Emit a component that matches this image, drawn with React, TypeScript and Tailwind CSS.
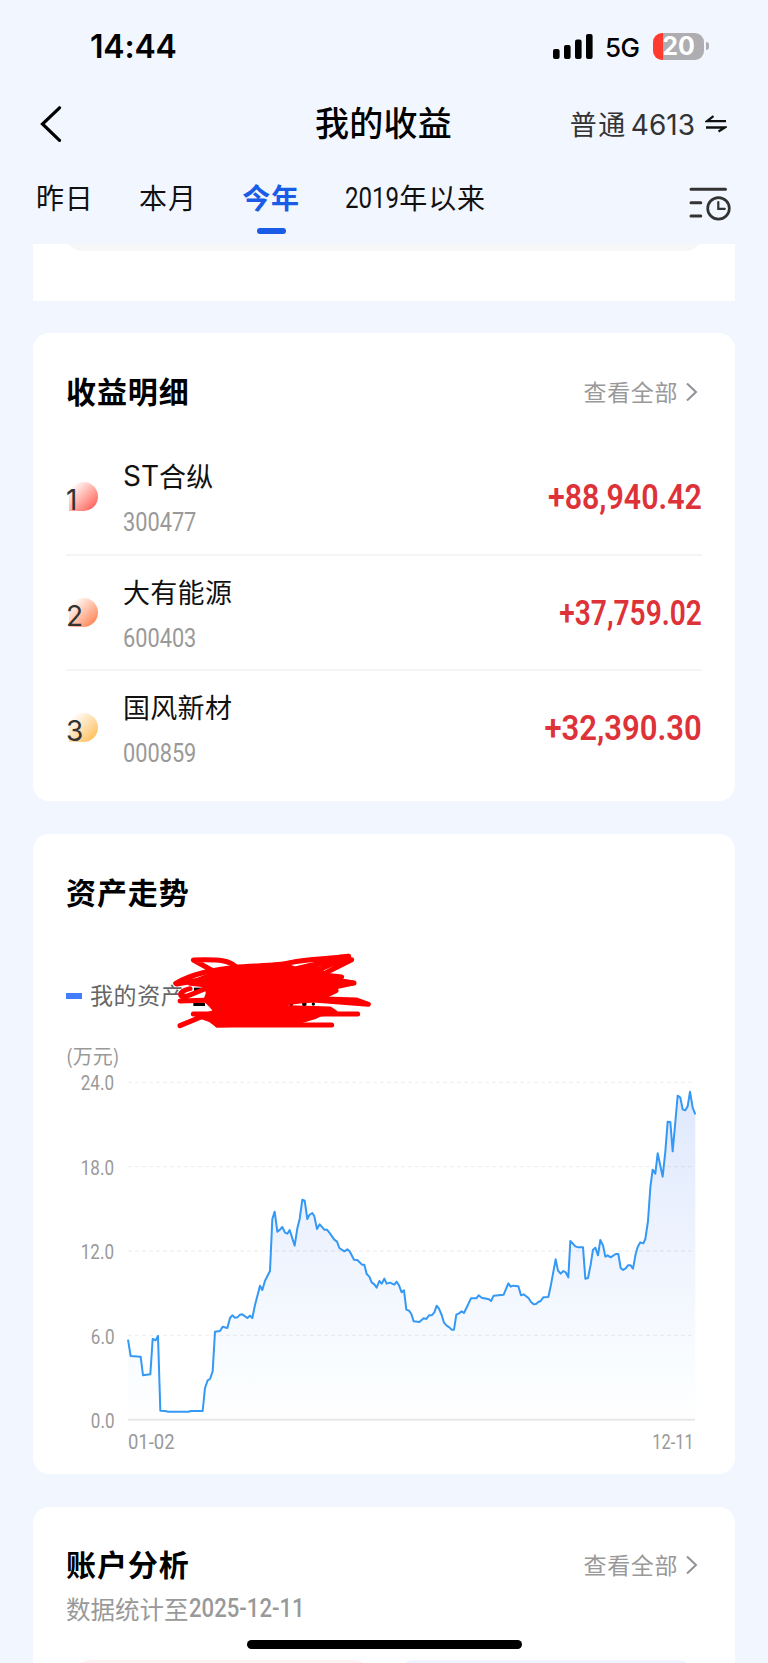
import type { ReactNode } from 'react'
import clsx from 'clsx'

const tabs = ['昨日', '本月', '今年']

const stocks = [
  { rank: 1, name: 'ST合纵', code: '300477', profit: '+88,940.42', badge: 'to-[#ff3b41]', scale: 'scale-x-[0.88]' },
  { rank: 2, name: '大有能源', code: '600403', profit: '+37,759.02', badge: 'to-[#ff7033]', scale: 'scale-x-[0.815]' },
  { rank: 3, name: '国风新材', code: '000859', profit: '+32,390.30', badge: 'to-[#ffb42e]', scale: 'scale-x-[0.9]' },
]

const axis = ['24.0', '18.0', '12.0', '6.0', '0.0']

// asset curve, in thirds of a pixel from the top left of the plot
const curve =
  '0,773 8,822 38,824 45,880 67,877 74,771 83,775 90,762 97,986 111,987 121,989 181,989 189,987 224,987 231,918 239,895 246,891 254,868 261,749 276,747 284,734 298,738 306,708 313,700 321,707 328,706 336,698 343,697 358,708 366,701 373,708 381,669 396,611 403,624 411,596 426,567 433,411 440,389 448,449 456,443 463,435 471,452 478,455 485,444 500,491 508,439 515,411 523,353 530,356 538,411 ' +
  '544,399 553,393 559,403 567,441 575,427 589,443 597,443 604,452 619,473 627,479 634,498 649,508 658,502 665,508 678,533 688,534 702,548 709,548 716,576 724,584 731,601 739,607 746,617 754,597 761,605 769,590 776,605 786,602 799,608 806,599 813,610 821,631 828,625 835,683 843,686 850,696 857,718 874,720 887,709 895,711 903,700 911,700 919,691 926,671 933,680 941,699 948,722 956,731 964,736 971,743 978,743 985,698 993,694 1001,688 1008,693 1029,649 1045,649 1052,640 1061,647 1083,652 1089,657 1097,641 1127,638 ' +
  '1141,604 1148,614 1155,611 1171,613 1179,640 1187,637 1202,649 1209,660 1217,667 1224,666 1231,660 1238,657 1246,646 1261,645 1268,613 1283,532 1290,566 1298,575 1306,567 1313,571 1321,586 1327,477 1342,493 1351,496 1365,496 1372,590 1380,588 1388,548 1395,503 1402,497 1410,520 1417,474 1425,490 1432,524 1439,520 1448,526 1463,516 1471,516 1478,558 1485,564 1493,559 1500,550 1508,550 1515,560 1523,516 1529,495 1537,481 1546,484 1552,471 1560,417 1567,317 1574,263 1582,275 1589,214 1604,284 1612,209 1619,119 1627,120 1634,208 1642,120 1649,41 1657,47 1664,82 1672,85 1679,73 1686,29 1694,77 1702,97'

function Num({ children, className }: { children: ReactNode; className?: string }) {
  return <span className={clsx("inline-block whitespace-nowrap font-['Roboto',sans-serif]", className)}>{children}</span>
}

function StatusBar() {
  return (
    <div className="flex h-[90px] items-center pl-[90px] pr-[59px] pt-0.5 font-['Inter',sans-serif] text-black">
      <span className="pt-0.5 text-[32px] font-semibold leading-none tracking-[-0.2px]">14:44</span>
      <svg className="ml-auto" width="40" height="25" viewBox="0 0 40 25">
        <rect x="0" y="15" width="6.6" height="10" rx="2" />
        <rect x="11" y="11" width="6.6" height="14" rx="2" />
        <rect x="22" y="5.5" width="6.6" height="19.5" rx="2" />
        <rect x="33" y="0" width="6.6" height="25" rx="2" />
      </svg>
      <span className="ml-3 w-[35px] pt-1 text-[26px] font-medium leading-none tracking-[-0.5px]">5G</span>
      <div className="ml-[13px] flex h-[27px] w-[51px] items-center justify-center rounded-[9px] bg-linear-to-r from-[#ff3b30] from-[20%] to-[#adadb2] to-[20%] text-[25px] font-bold leading-none text-white">
        20
      </div>
      <div className="ml-0.5 h-2 w-[3px] rounded-r-full bg-[#adadb2]" />
    </div>
  )
}

function Header() {
  return (
    <header className="grid h-[67px] grid-cols-3 items-center pl-10 pr-[41px]">
      <svg width="22" height="36" viewBox="0 0 22 36" fill="none" stroke="#000" strokeWidth="3.2" strokeLinecap="round">
        <path d="M19.500 1.800 2.500 18l17 16.300" />
      </svg>
      <h1 className="-mt-[3px] text-center text-[34px] font-medium leading-none tracking-[0.2px] text-black">我的收益</h1>
      <div className="flex items-center justify-end text-[#333]">
        <span className="text-[27px] leading-none tracking-[1.5px]">普通</span>
        <span className="ml-1 pt-0.5 font-['Inter',sans-serif] text-[28px] leading-none">4613</span>
        <svg className="ml-2.5" width="22" height="18" viewBox="0 0 22 18" fill="none" stroke="#111" strokeWidth="2.3">
          <path d="M21 6.200H2l6.500-5M1 12.500h19l-6.500 4" />
        </svg>
      </div>
    </header>
  )
}

function Tabs() {
  return (
    <nav className="flex h-[87px] items-start pl-9 pr-[37px] pt-6 text-[28px] leading-8 tracking-[0.8px] text-[#111]">
      {tabs.map((tab) => (
        <div key={tab} className={clsx('mr-[45.5px] flex flex-col items-center', tab === '今年' && 'font-bold text-[#1a5ce6]')}>
          {tab}
          {tab === '今年' && <div className="mt-[15px] h-[5.500px] w-[29px] rounded-full bg-[#1a5ce6]" />}
        </div>
      ))}
      <div className="flex">
        <Num className="w-[54px] origin-left scale-x-[0.83] text-[29px] leading-[34px] tracking-normal">2019</Num>
        年以来
      </div>
      <svg className="ml-auto mt-1.5" width="42" height="34" viewBox="0 0 42 34" fill="none" stroke="#333" strokeLinecap="round">
        <path d="M2 2.300h34.500M2 15.700h9.800M2 29h9.800" strokeWidth="3" />
        <circle cx="29.500" cy="21.400" r="10.800" strokeWidth="2.700" />
        <path d="M29.300 15v6.800h6.500" strokeWidth="2.200" />
      </svg>
    </nav>
  )
}

function SectionTitle({ title, more }: { title: string; more?: boolean }) {
  return (
    <div className="flex h-[31px] items-center justify-between">
      <h2 className="-mt-[3px] text-[30px] font-bold leading-none tracking-[0.9px] text-black">{title}</h2>
      {more && (
        <a href="#" className="flex items-center text-[23px] leading-none tracking-[0.6px] text-[#999]">
          <span className="-mt-px">查看全部</span>
          <svg className="ml-2 mr-1" width="12" height="20" viewBox="0 0 12 20" fill="none" stroke="#909096" strokeWidth="2">
            <path d="m1 1.500 9 8.500-9 8.500" />
          </svg>
        </a>
      )}
    </div>
  )
}

function ProfitList() {
  return (
    <section className="mt-8 h-[468px] rounded-2xl bg-white px-[33px] pt-[43px]">
      <SectionTitle title="收益明细" more />
      <ul className="mt-[33px]">
        {stocks.map((s) => (
          <li key={s.code} className="flex h-[115.5px] items-start border-b-2 border-[#f4f4f5] last:border-0">
            <div className="relative ml-[3px] mt-[42px] size-[29px] shrink-0">
              <div className={clsx('size-full rounded-full rounded-bl-none bg-linear-to-br from-white from-10%', s.badge)} />
              <span className="absolute -left-[3px] top-[4px] font-['Inter',sans-serif] text-[28px] leading-[29px] text-[#333]">{s.rank}</span>
            </div>
            <div className="ml-[25px] flex flex-col pt-5">
              <span className="flex text-[27px] leading-8 tracking-[0.3px] text-[#111]">
                {s.name.startsWith('ST') && <span className="font-['Inter',sans-serif] text-[28px] tracking-normal">ST</span>}
                {s.name.replace('ST', '')}
              </span>
              <Num className="mt-[17px] origin-left scale-x-[0.87] text-[25px] leading-7 text-[#999]">{s.code}</Num>
            </div>
            <Num className={clsx('ml-auto mt-[37px] origin-right text-[34.500px] font-semibold leading-10 text-[#dd3238]', s.scale)}>{s.profit}</Num>
          </li>
        ))}
      </ul>
    </section>
  )
}

function Scribble() {
  return (
    <svg className="absolute -top-[30px] left-[104px]" width="205" height="80" viewBox="510 150 615 240" fill="none" stroke="#f00" strokeWidth="15" strokeLinecap="round" strokeLinejoin="round">
      <g fill="#000" stroke="none">
        <rect x="580" y="308" width="35" height="10" />
        <rect x="582" y="263" width="34" height="10" />
        <circle cx="873" cy="313" r="6" />
        <circle cx="913" cy="312" r="7" />
        <circle cx="940" cy="312" r="5" />
      </g>
      <path
        fill="#f00"
        d="M640 222 705 207 790 198 850 194 885 207 920 202 960 206 970 225 1025 231 1005 239 1060 249 1000 262 1008 272 985 283 960 297 935 301 900 303 860 308 820 322 990 327 1005 337 960 342 945 350 885 368 652 375 632 360 605 350 650 335 632 314 618 300 625 280 620 255 570 250Z"
      />
      <path d="M527 250C570 225 640 206 710 203C690 180 660 178 580 180L645 216M700 202C770 196 830 198 870 188C930 176 980 178 1046 169C1000 170 960 190 900 212M890 206C950 190 1000 180 1055 179L970 222M960 208 1045 170M530 252 650 232M570 266C530 275 535 300 570 285L650 252M540 303 640 300M950 296 1070 300 1105 313 940 300M580 342H1073M605 350 540 377M652 375H995M960 249H1062" />
    </svg>
  )
}

function AssetChart() {
  return (
    <section className="mt-[33px] h-[640px] rounded-2xl bg-white px-[33px] pt-[43px]">
      <SectionTitle title="资产走势" />
      <div className="relative mt-[72px] flex h-8 items-center">
        <div className="h-[6px] w-4 bg-[#447dfb]" />
        <span className="-mt-[3px] ml-2 text-[23px] leading-none tracking-[0.6px] text-[#666]">我的资产</span>
        <Scribble />
      </div>
      <div className="mt-[30px] text-[20px] leading-7 text-[#999]">(万元)</div>
      <div className="mt-[3px] flex">
        <div className="flex h-[358px] w-[48px] flex-col items-end justify-between text-[20.500px] leading-5 text-[#999]">
          {axis.map((v) => (
            <Num key={v} className="origin-right scale-x-[0.83]">
              {v}
            </Num>
          ))}
        </div>
        <svg className="ml-3.5 mt-[9px] overflow-visible" width="567" height="338" viewBox="0 0 1701 1014" fill="none">
          <defs>
            <linearGradient id="area" x1="0" y1="0" x2="0" y2="1">
              <stop offset="0" stopColor="#dfe9fd" />
              <stop offset="0.5" stopColor="#eff4fe" />
              <stop offset="0.85" stopColor="#fafdff" />
              <stop offset="1" stopColor="#fefefe" />
            </linearGradient>
          </defs>
          <polygon points={`0,1014 ${curve} 1702,1014`} fill="url(#area)" />
          <path d="M0 1H1690M0 254H1690M0 507H1690M0 760H1690" stroke="#000" strokeOpacity="0.06" strokeWidth="4" strokeDasharray="12 9" />
          <path d="M0 1013H1701" stroke="#e9e9ea" strokeWidth="6" />
          <polyline points={curve} stroke="#3498f5" strokeWidth="6" strokeLinejoin="round" />
        </svg>
      </div>
      <div className="-mt-px ml-[62px] mr-2 flex justify-between text-[20.500px] leading-6 text-[#999]">
        <Num className="origin-left scale-x-[0.9]">01-02</Num>
        <Num className="origin-right scale-x-[0.8]">12-11</Num>
      </div>
    </section>
  )
}

function AccountAnalysis() {
  return (
    <section className="mt-[33px] h-[156px] overflow-hidden rounded-t-2xl bg-white px-[33px] pt-[42px]">
      <SectionTitle title="账户分析" more />
      <div className="mt-[13px] flex h-8 items-center text-[24.500px] leading-8 text-[#999]">
        数据统计至
        <Num className="origin-left scale-x-[0.885] text-[25px] font-medium">2025-12-11</Num>
      </div>
      <div className="mt-[35px] flex gap-7 px-2">
        <div className="h-10 flex-1 rounded-2xl bg-[#fff1f2]" />
        <div className="h-10 flex-1 rounded-2xl bg-[#edf3ff]" />
      </div>
    </section>
  )
}

export default function App() {
  return (
    <div className="relative h-[1663px] w-[768px] overflow-hidden bg-[#f2f6ff] font-['Noto_Sans_CJK_SC',sans-serif]">
      <StatusBar />
      <Header />
      <Tabs />
      <main className="px-[33px]">
        <div className="flex h-[57px] items-start overflow-hidden bg-white px-[33px]">
          <div className="-mt-4 h-[23px] w-full rounded-b-2xl bg-[#f7f7f8]" />
        </div>
        <ProfitList />
        <AssetChart />
        <AccountAnalysis />
      </main>
      <div className="absolute bottom-3.5 left-[247px] h-[9px] w-[275px] rounded-full bg-black" />
    </div>
  )
}
